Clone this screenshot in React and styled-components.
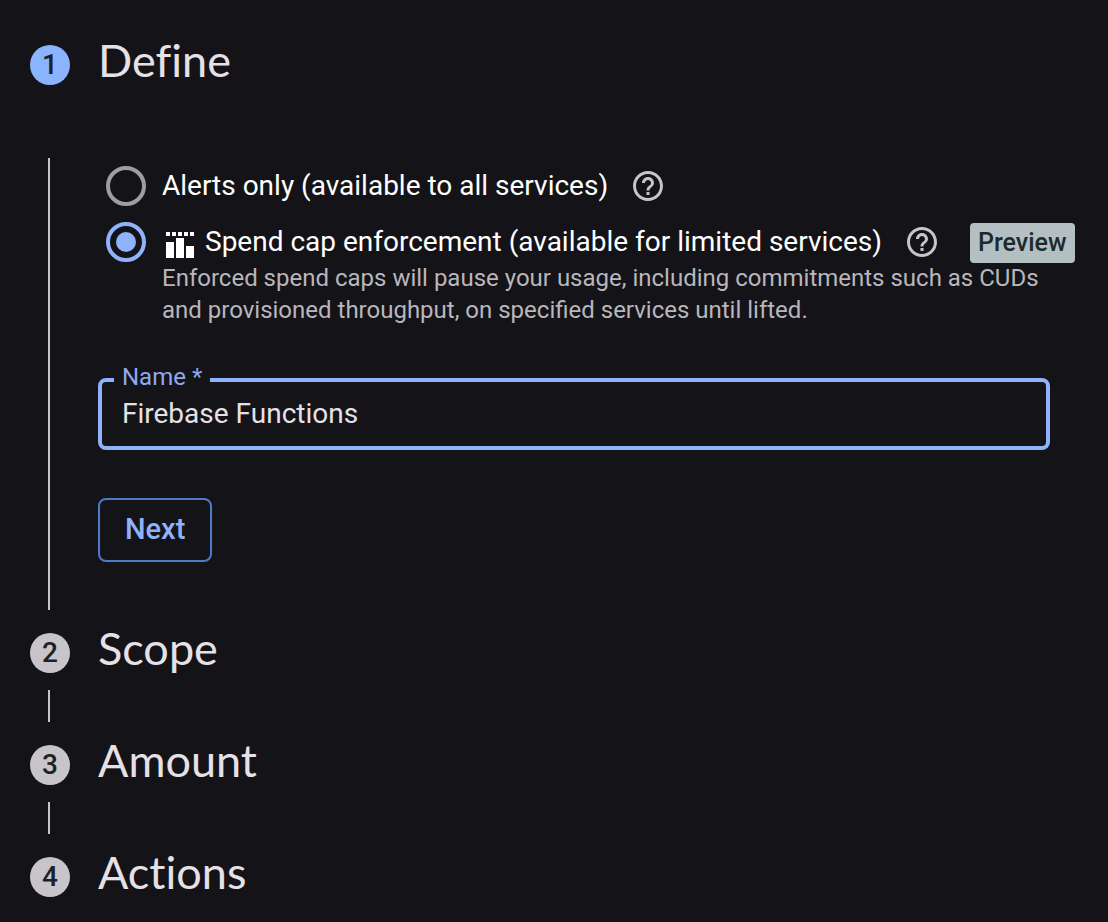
import React, { useState } from "react";
import styled, { createGlobalStyle } from "styled-components";
import { MdHelpOutline } from "react-icons/md";

const collapsedSteps = ["Scope", "Amount", "Actions"];

function SpendCapIcon() {
  return (
    <svg width="28" height="26" viewBox="0 0 28 26" fill="#fff" aria-hidden="true">
      <path d="M0 0h4v4H0zM6 0h4v4H6zM12 0h4v4h-4zM18 0h4v4h-4zM24 0h4v4h-4z" />
      <path d="M0 10h8v16H0zM10 6h8v20h-8zM20 14h8v12h-8z" />
    </svg>
  );
}

export default function App() {
  const [type, setType] = useState("cap");
  const [name, setName] = useState("Firebase Functions");

  return (
    <>
      <GlobalStyle />
      <Stepper>
        <StepHeader>
          <StepNumber $active>1</StepNumber>
          <StepTitle>Define</StepTitle>
        </StepHeader>
        <StepBody>
          <Options>
            <Option>
              <Radio
                id="alerts"
                name="type"
                checked={type === "alerts"}
                onChange={() => setType("alerts")}
              />
              <OptionLabel htmlFor="alerts">
                Alerts only (available to all services)
              </OptionLabel>
              <HelpButton aria-label="Help">
                <MdHelpOutline />
              </HelpButton>
            </Option>
            <Option>
              <Radio
                id="cap"
                name="type"
                checked={type === "cap"}
                onChange={() => setType("cap")}
              />
              <OptionLabel htmlFor="cap">
                <SpendCapIcon />
                Spend cap enforcement (available for limited services)
              </OptionLabel>
              <HelpButton aria-label="Help">
                <MdHelpOutline />
              </HelpButton>
              <Chip>Preview</Chip>
            </Option>
          </Options>
          <Description>
            Enforced spend caps will pause your usage, including commitments
            such as CUDs and provisioned throughput, on specified services until
            lifted.
          </Description>
          <Field>
            <legend>
              <label htmlFor="name">Name *</label>
            </legend>
            <input
              id="name"
              type="text"
              value={name}
              onChange={(e) => setName(e.target.value)}
            />
          </Field>
          <NextButton type="button">Next</NextButton>
        </StepBody>
        {collapsedSteps.map((title, i) => (
          <Step key={title}>
            <StepHeader>
              <StepNumber>{i + 2}</StepNumber>
              <StepTitle>{title}</StepTitle>
            </StepHeader>
          </Step>
        ))}
      </Stepper>
    </>
  );
}

const GlobalStyle = createGlobalStyle`
  * {
    box-sizing: border-box;
  }
  body {
    margin: 0;
    background-color: #141318;
    color: #e6e1e6;
    font-family: Roboto, "Liberation Sans", sans-serif;
  }
`;

const Stepper = styled.main`
  padding: 22px 34px 0 30px;
`;

const Step = styled.section`
  & + &::before {
    content: "";
    display: block;
    width: 2px;
    height: 32px;
    margin-left: 18px;
    background-color: #c8c5ca;
  }
`;

const StepHeader = styled.header`
  display: flex;
  height: 80px;
  gap: 28px;
`;

const StepNumber = styled.span`
  flex: none;
  width: 40px;
  height: 40px;
  margin-top: 23px;
  border-radius: 50%;
  background-color: ${({ $active }) => ($active ? "#8ab4ff" : "#c8c5ca")};
  color: #1c2126;
  font-size: 28px;
  font-weight: 500;
  line-height: 40px;
  text-align: center;
`;

const StepTitle = styled.h2`
  margin: 0;
  font-family: Lato, sans-serif;
  font-size: 45px;
  font-weight: 400;
  font-variant-ligatures: none;
  line-height: 76px;
`;

const StepBody = styled.div`
  margin: 56px 0 0 18px;
  padding: 8px 0 48px 48px;
  border-left: 2px solid #c8c5ca;
`;

const Options = styled.div`
  display: flex;
  flex-direction: column;
  gap: 16px;
  padding-left: 8px;
`;

const Option = styled.div`
  display: flex;
  align-items: center;
  height: 40px;
  white-space: nowrap;
`;

const Radio = styled.input.attrs({ type: "radio" })`
  appearance: none;
  flex: none;
  display: grid;
  place-items: center;
  width: 40px;
  height: 40px;
  margin: 0 16px 0 0;
  border: 4px solid #9f9da1;
  border-radius: 50%;
  cursor: pointer;
  &:checked {
    border-color: #8fb2fa;
  }
  &:checked::before {
    content: "";
    width: 20px;
    height: 20px;
    border-radius: 50%;
    background-color: #8fb2fa;
  }
`;

const OptionLabel = styled.label`
  display: flex;
  align-items: center;
  color: #fff;
  font-size: 28px;
  line-height: 40px;
  cursor: pointer;
  & > svg {
    margin: 6px 11px 0 4px;
  }
`;

const HelpButton = styled.button.attrs({ type: "button" })`
  display: flex;
  flex: none;
  margin-left: 22px;
  padding: 0;
  border: none;
  background: none;
  color: #c8c5ca;
  font-size: 36px;
  cursor: pointer;
`;

const Chip = styled.span`
  margin: 2px 0 0 30px;
  padding: 0 8px;
  border-radius: 4px;
  background-color: #b3bfc1;
  color: #1c2b2e;
  font-size: 25px;
  font-weight: 500;
  line-height: 40px;
`;

const Description = styled.p`
  margin: 0 0 39px 64px;
  color: #b9b6bc;
  font-size: 24px;
  line-height: 32px;
`;

const Field = styled.fieldset`
  margin: 0 24px 48px 0;
  padding: 0 20px 15px;
  border: 4px solid #8fb2fa;
  border-radius: 8px;
  & > legend {
    margin-left: -8px;
    padding: 0 8px 6px;
    color: #8fa9ee;
    font-size: 24px;
    line-height: 24px;
  }
  & > input {
    display: block;
    width: 100%;
    height: 36px;
    padding: 0;
    border: none;
    outline: none;
    background: none;
    color: #e6e1e6;
    font-family: inherit;
    font-size: 28px;
  }
`;

const NextButton = styled.button`
  display: block;
  height: 64px;
  padding: 0 25px 2px;
  border: 2px solid #4d7bc9;
  border-radius: 8px;
  background: none;
  color: #8fb2fa;
  font-family: inherit;
  font-size: 29px;
  font-weight: 500;
  cursor: pointer;
`;
